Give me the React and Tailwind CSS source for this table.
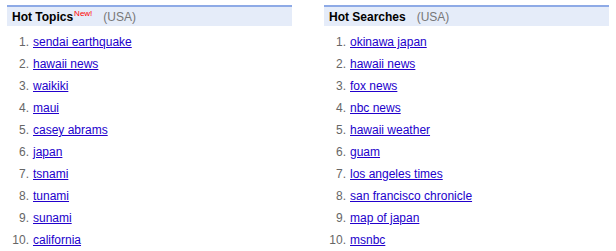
import React from 'react';

const topics = [
  'sendai earthquake',
  'hawaii news',
  'waikiki',
  'maui',
  'casey abrams',
  'japan',
  'tsnami',
  'tunami',
  'sunami',
  'california',
];

const searches = [
  'okinawa japan',
  'hawaii news',
  'fox news',
  'nbc news',
  'hawaii weather',
  'guam',
  'los angeles times',
  'san francisco chronicle',
  'map of japan',
  'msnbc',
];

const Panel = ({ title, isNew, items }) => (
  <div className="w-[285px]">
    <div className="h-[21px] border-t-2 border-[#8eaae6] bg-[#e5ecf9] flex items-center pl-[5px] text-[12px]">
      <span className="font-bold text-black">{title}</span>
      {isNew && <span className="text-[8px] text-[#ff0000] self-start mt-[1px] ml-[1px]">New!</span>}
      <span className="text-[#777] ml-[11px]">(USA)</span>
    </div>
    <ol className="pt-[5px]">
      {items.map((item, i) => (
        <li key={item} className="h-[22px] flex items-center text-[12px]">
          <span className="w-[22px] text-right text-[#666]">{i + 1}.</span>
          <a href="#" className="ml-[4px] text-[#2200cc] underline">{item}</a>
        </li>
      ))}
    </ol>
  </div>
);

const App = () => (
  <div className="w-[616px] h-[251px] bg-white flex gap-[32px] pl-[7px] pt-[5px] overflow-hidden" style={{ fontFamily: 'Arial, "Liberation Sans", sans-serif' }}>
    <Panel title="Hot Topics" isNew items={topics} />
    <Panel title="Hot Searches" items={searches} />
  </div>
);

export default App;
